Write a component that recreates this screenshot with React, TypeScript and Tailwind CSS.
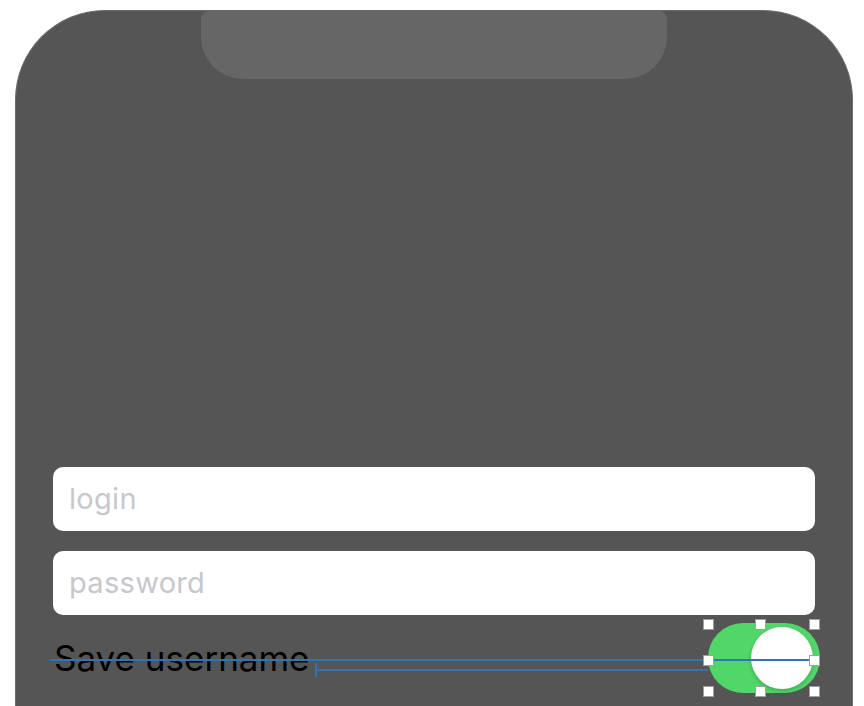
import React from "react";

function Handle({ x, y }: { x: number; y: number }) {
  return (
    <div
      className="absolute w-[11px] h-[11px] bg-white border border-[#a0a0a0]"
      style={{ left: x - 5, top: y - 5 }}
    />
  );
}

export default function App() {
  return (
    <div className="relative w-[864px] h-[706px] bg-white overflow-hidden" style={{ fontFamily: "Inter, 'Noto Sans', sans-serif" }}>
      <div className="relative ml-[15px] mt-[10px] w-[838px] h-[720px] bg-[#555555] rounded-t-[90px] border-t border-x border-[#6a6a6a] flex flex-col">
        <div className="mx-auto w-[466px] h-[68px] bg-[#666666] rounded-b-[42px] rounded-t-[8px]" />
        <div className="mt-[388px] px-[37px] flex flex-col gap-[20px]">
          <div className="h-[64px] bg-white rounded-[10px] flex items-center pl-[16px] text-[29px] tracking-[0.3px] text-[#c7c7cd]">login</div>
          <div className="h-[64px] bg-white rounded-[10px] flex items-center pl-[16px] text-[29px] tracking-[0.3px] text-[#c7c7cd]">password</div>
        </div>
        <div className="mt-[8px] pl-[38px] pr-[32px] flex items-center justify-between h-[70px]">
          <span className="text-[35px] text-black leading-none">Save username</span>
          <div className="w-[112px] h-[70px] rounded-full bg-[#51d66a] relative">
            <div className="absolute right-[7px] top-[4px] w-[62px] h-[62px] rounded-full bg-white shadow-[0_2px_4px_rgba(0,0,0,0.2)]" />
          </div>
        </div>
      </div>
      {/* selection overlay */}
      <div className="absolute left-[50px] top-[659px] w-[765px] h-[2px] bg-[#2f75b5]" />
      <div className="absolute left-[316px] top-[669px] w-[392px] h-[2px] bg-[#2f75b5]" />
      <div className="absolute left-[315px] top-[663px] w-[2px] h-[14px] bg-[#2f75b5]" />
      <Handle x={708} y={624} />
      <Handle x={760} y={624} />
      <Handle x={814} y={624} />
      <Handle x={708} y={660} />
      <Handle x={814} y={660} />
      <Handle x={708} y={691} />
      <Handle x={760} y={691} />
      <Handle x={814} y={691} />
    </div>
  );
}
